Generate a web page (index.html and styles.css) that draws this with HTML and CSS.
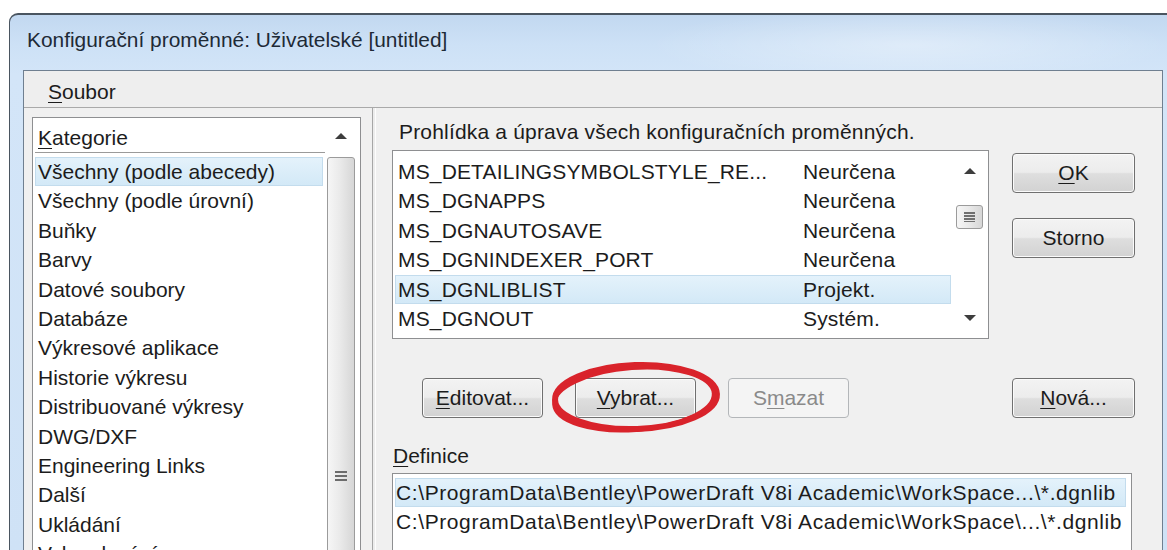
FILE: index.html
```html
<!DOCTYPE html>
<html lang="cs">
<head>
<meta charset="utf-8">
<title>Konfigurační proměnné</title>
<link rel="stylesheet" href="styles.css">
</head>
<body>
<div class="window">
  <div class="titlebar">Konfigurační proměnné: Uživatelské [untitled]</div>
  <div class="client">
    <div class="menubar"><span class="menu-item"><u>S</u>oubor</span></div>
    <div class="panes">
      <div class="pane-left">
        <div class="listbox cat-list">
          <div class="cat-main">
            <div class="cat-header"><u>K</u>ategorie</div>
            <ul class="items">
              <li class="sel">Všechny (podle abecedy)</li>
              <li>Všechny (podle úrovní)</li>
              <li>Buňky</li>
              <li>Barvy</li>
              <li>Datové soubory</li>
              <li>Databáze</li>
              <li>Výkresové aplikace</li>
              <li>Historie výkresu</li>
              <li>Distribuované výkresy</li>
              <li>DWG/DXF</li>
              <li>Engineering Links</li>
              <li>Další</li>
              <li>Ukládání</li>
              <li>Vykreslování</li>
            </ul>
          </div>
          <div class="vscroll cat-scroll">
            <div class="arrow-box head"><span class="arrow up"></span></div>
            <div class="thumb long"><span class="grip"></span></div>
          </div>
        </div>
      </div>
      <div class="splitter"></div>
      <div class="pane-right">
        <div class="caption">Prohlídka a úprava všech konfiguračních proměnných.</div>

        <div class="listbox var-list">
          <ul class="items var-items">
            <li><span class="var-name">MS_DETAILINGSYMBOLSTYLE_RE...</span><span>Neurčena</span></li>
            <li><span class="var-name">MS_DGNAPPS</span><span>Neurčena</span></li>
            <li><span class="var-name">MS_DGNAUTOSAVE</span><span>Neurčena</span></li>
            <li><span class="var-name">MS_DGNINDEXER_PORT</span><span>Neurčena</span></li>
            <li class="sel"><span class="var-name">MS_DGNLIBLIST</span><span>Projekt.</span></li>
            <li><span class="var-name">MS_DGNOUT</span><span>Systém.</span></li>
          </ul>
          <div class="vscroll var-scroll">
            <div class="arrow-box"><span class="arrow up"></span></div>
            <div class="thumb short"><span class="grip"></span></div>
            <div class="track-fill"></div>
            <div class="arrow-box"><span class="arrow down"></span></div>
          </div>
        </div>

        <div class="side-buttons">
          <button class="btn wide"><u>O</u>K</button>
          <button class="btn wide">Storno</button>
        </div>

        <div class="action-row">
          <button class="btn"><u>E</u>ditovat...</button>
          <button class="btn"><u>V</u>ybrat...</button>
          <button class="btn" disabled>S<u>m</u>azat</button>
          <svg class="mark" width="200" height="90" viewBox="0 0 200 90">
            <ellipse cx="100" cy="44" rx="81" ry="32" fill="none" stroke="#d9232b" stroke-width="6" transform="rotate(-2 100 44)"/>
            <ellipse cx="98" cy="46" rx="80" ry="31" fill="none" stroke="#d9232b" stroke-width="4" transform="rotate(-4 98 46)"/>
          </svg>
        </div>
        <div class="new-cell">
          <button class="btn wide"><u>N</u>ová...</button>
        </div>

        <div class="def-label"><u>D</u>efinice</div>

        <div class="listbox def-list">
          <ul class="items def-items">
            <li class="sel">C:\ProgramData\Bentley\PowerDraft V8i Academic\WorkSpace...\*.dgnlib</li>
            <li>C:\ProgramData\Bentley\PowerDraft V8i Academic\WorkSpace\...\*.dgnlib</li>
          </ul>
        </div>
      </div>
    </div>
  </div>
</div>
</body>
</html>
```

FILE: styles.css
```css
* {
  box-sizing: border-box;
}

html,
body {
  margin: 0;
  height: 100%;
}

body {
  background: #ffffff;
  overflow: hidden;
  font-family: "Liberation Sans", Arial, sans-serif;
  font-size: 21px;
  color: #1c1c1c;
}

u {
  text-decoration: underline;
  text-underline-offset: 3px;
  text-decoration-thickness: 1px;
}

/* window frame */
.window {
  width: 1158px;
  height: 537px;
  overflow: hidden;
  margin: 13px 0 0 9px;
  border-top: 2px solid #4a5560;
  border-left: 1px solid #4a5560;
  border-radius: 9px 0 0 0;
  padding-left: 13px;
  display: flex;
  flex-direction: column;
  background:
    radial-gradient(ellipse 260px 40px at 900px 30px, rgba(255, 255, 255, 0.35), rgba(255, 255, 255, 0)),
    linear-gradient(180deg, #c2d8f0 0px, #cde1f6 30px, #d3e5f8 60px, #cfe2f6 100%);
}

.titlebar {
  height: 55px;
  flex: none;
  padding: 13px 0 0 4px;
  font-size: 20.9px;
  color: #1e2a36;
  white-space: nowrap;
}

/* client area */
.client {
  width: 1140px;
  flex: 1;
  min-height: 0;
  overflow: hidden;
  border: 1px solid #6f7f90;
  border-bottom: none;
  background: #f0f0f0;
  display: flex;
  flex-direction: column;
}

.menubar {
  height: 37px;
  flex: none;
  border-bottom: 1px solid #a9a9a9;
  background: #eeeeee;
  padding: 6px 0 0 24px;
  line-height: 29px;
}

.panes {
  display: flex;
  flex: 1;
  min-height: 0;
}

.pane-left {
  width: 348px;
  flex: none;
  padding: 9px 0 0 8px;
  overflow: hidden;
}

.splitter {
  width: 4px;
  flex: none;
  border-left: 1px solid #a6a6a6;
  border-right: 1px solid #fdfdfd;
  background: #ececec;
}

/* list boxes */
.listbox {
  background: #ffffff;
  border: 1px solid #8e8f91;
  display: flex;
}

.items {
  list-style: none;
  margin: 0;
  padding: 0;
}

.items li {
  height: 29.4px;
  line-height: 27.4px;
  white-space: nowrap;
  border: 1px solid transparent;
}

.items li.sel {
  background: linear-gradient(180deg, #e4f2fb, #d3e9f7);
  border-color: #c3dced;
}

/* category list */
.cat-list {
  width: 329px;
  height: 460px;
}

.cat-main {
  width: 290px;
  flex: none;
  padding-left: 2px;
}

.cat-header {
  height: 35px;
  border-bottom: 1px solid #9a9a9a;
  padding: 5px 0 0 3px;
  line-height: 29px;
  margin-right: -2px;
}

.cat-main .items {
  margin-top: 4px;
}

.cat-main .items li {
  padding-left: 2px;
  width: 288px;
}

/* scrollbars */
.vscroll {
  display: flex;
  flex-direction: column;
  align-items: center;
  flex: none;
}

.cat-scroll {
  width: 28px;
  margin-left: 4px;
}

.arrow-box {
  display: flex;
  align-items: center;
  justify-content: center;
  width: 100%;
  flex: none;
}

.arrow-box.head {
  height: 39px;
  padding-bottom: 4px;
}

.arrow {
  width: 0;
  height: 0;
  border-left: 6px solid transparent;
  border-right: 6px solid transparent;
}

.arrow.up {
  border-bottom: 6px solid #3d3d3d;
}

.arrow.down {
  border-top: 6px solid #3d3d3d;
}

.thumb {
  width: 100%;
  border: 1px solid #9b9b9b;
  border-radius: 3px;
  background: linear-gradient(90deg, #f6f6f6 0%, #eaeaea 45%, #d6d6d6 100%);
  display: flex;
  align-items: center;
  justify-content: center;
  flex: none;
}

.thumb.long {
  height: 430px;
  align-items: flex-start;
  padding-top: 313px;
}

.grip {
  width: 12px;
  height: 11px;
  background: repeating-linear-gradient(180deg, #6c6c6c 0 2px, transparent 2px 4px);
}

.var-scroll {
  width: 37px;
}

.var-scroll .arrow-box {
  height: 40px;
}

.thumb.short {
  width: 27px;
  height: 24px;
  margin-top: 14px;
}

.thumb.short .grip {
  width: 11px;
  height: 10px;
  background: repeating-linear-gradient(180deg, #707070 0 1.5px, transparent 1.5px 3px);
}

.track-fill {
  flex: 1;
}

/* right pane */
.pane-right {
  flex: 1;
  min-height: 0;
  overflow: hidden;
  padding: 9px 0 0 16px;
  display: grid;
  grid-template-columns: 597px 123px;
  grid-template-rows: 33px 189px 79px 55px auto;
  column-gap: 23px;
  align-content: start;
  align-items: start;
}

.caption {
  grid-column: 1 / span 2;
  padding-left: 7px;
  line-height: 29px;
  letter-spacing: 0.18px;
  white-space: nowrap;
}

.var-list {
  height: 189px;
}

.var-items {
  width: 558px;
  padding: 6px 0 0 2px;
  letter-spacing: 0.15px;
}

.var-items li {
  display: flex;
  padding-left: 2px;
}

.var-name {
  width: 405px;
  flex: none;
}

.side-buttons {
  display: flex;
  flex-direction: column;
  gap: 25px;
  padding-top: 3px;
}

.btn {
  width: 121px;
  height: 40px;
  padding: 0;
  border: 1px solid #707070;
  border-radius: 4px;
  background: linear-gradient(180deg, #f3f3f3 0%, #ececec 48%, #dedede 52%, #d2d2d2 100%);
  box-shadow: inset 0 0 0 1px #fbfbfb;
  font: inherit;
  color: #1c1c1c;
}

.btn.wide {
  width: 123px;
}

.btn:disabled {
  border-color: #b3b6b9;
  background: #f4f4f4;
  box-shadow: none;
  color: #8a8a8a;
}

.action-row {
  position: relative;
  display: flex;
  gap: 32px;
  padding-left: 30px;
  margin-top: 39px;
  height: 40px;
}

.new-cell {
  margin-top: 39px;
}

.mark {
  position: absolute;
  left: 144px;
  top: -25px;
  pointer-events: none;
}

.def-label {
  grid-column: 1 / span 2;
  padding: 23px 0 0 1px;
  line-height: 29px;
}

.def-list {
  grid-column: 1 / span 2;
  width: 740px;
  height: 90px;
  padding: 4px 5px 0 2px;
}

.def-items {
  flex: 1;
  letter-spacing: 0.6px;
}

.def-items li {
  padding-left: 0;
}
```
